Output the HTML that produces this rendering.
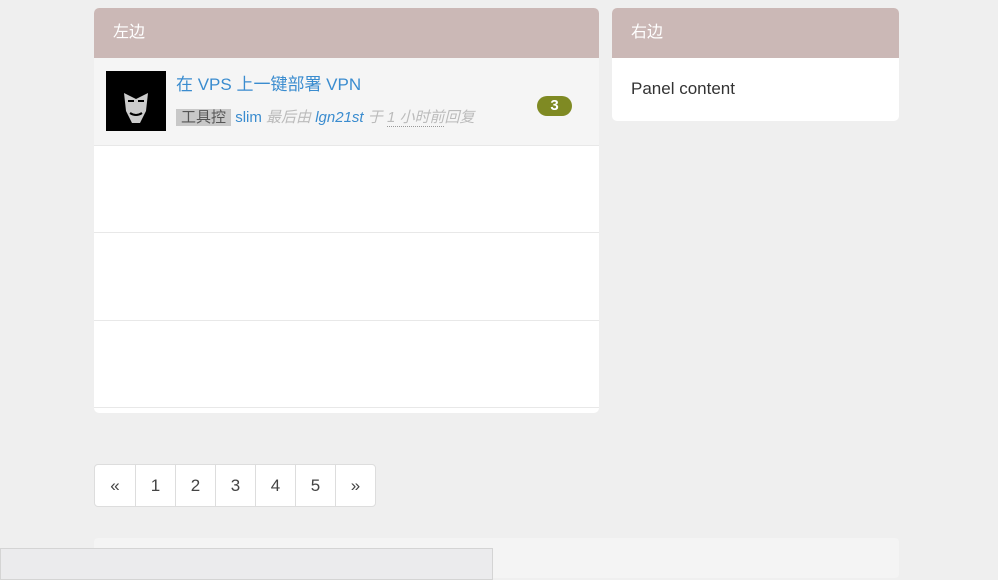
<!DOCTYPE html><html><head><meta charset="utf-8"><style>
body{margin:0;width:998px;height:568px;background:#efefef;font-family:"Liberation Sans","Noto Sans CJK SC",sans-serif;overflow:hidden;position:relative}
.p{position:absolute;background:#fff;border-radius:5px;overflow:hidden}
.h{background:#cbb8b6;color:#fff;height:50px;line-height:50px;padding-left:19px;font-size:16px}
.row{position:absolute;left:0;width:505px;border-bottom:1px solid #e8e8e8}
.pg{position:absolute;left:94px;top:464px;height:41px;display:flex;border:1px solid #ddd;border-radius:4px;background:#fff}
.pg div{width:40px;box-sizing:border-box;text-align:center;line-height:41px;font-size:17px;color:#444;border-left:1px solid #ddd}
.pg div:first-child{border-left:none;width:40px}
</style></head><body>
<div class="p" style="left:94px;top:8px;width:505px;height:405px">
<div class="h">左边</div>
<div class="row" style="top:50px;height:87px;background:#f5f5f5">
<div style="position:absolute;left:12px;top:13px;width:60px;height:60px;background:#000">
<svg width="60" height="60"><path d="M18 22 L30 28 L42 22 L40 40 L34 52 L26 52 L20 40Z" fill="#ccc"/><path d="M22 30h6M32 30h6" stroke="#000" stroke-width="2"/><path d="M24 42q6 4 12 0" stroke="#000" stroke-width="2" fill="none"/></svg></div>
<div style="position:absolute;left:82px;top:12px;font-size:17px;color:#3a8ccf">在 VPS 上一键部署 VPN</div>
<div style="position:absolute;left:82px;top:48px;font-size:15px;white-space:nowrap"><span style="background:#c8c8c8;color:#555;padding:0 5px">工具控</span> <span style="color:#3a8ccf">slim</span> <i style="color:#bbb">最后由</i> <i style="color:#3a8ccf">lgn21st</i> <i style="color:#bbb">于 <span style="border-bottom:1px dotted #999">1 小时前</span>回复</i></div>
<div style="position:absolute;left:443px;top:38px;width:35px;height:20px;border-radius:10px;background:#7f8a23;color:#fff;font-weight:bold;font-size:15px;text-align:center;line-height:20px">3</div>
</div>
<div class="row" style="top:138px;height:86px"></div>
<div class="row" style="top:225px;height:87px"></div>
<div class="row" style="top:313px;height:86px"></div>
</div>
<div class="p" style="left:612px;top:8px;width:287px;height:113px">
<div class="h">右边</div>
<div style="padding:21px 19px;font-size:17px;color:#333">Panel content</div>
</div>
<div class="pg"><div>«</div><div>1</div><div>2</div><div>3</div><div>4</div><div>5</div><div>»</div></div>
<div style="position:absolute;left:94px;top:538px;width:805px;height:40px;background:#f4f4f4;border-radius:4px"></div>
<div style="position:absolute;left:0;top:548px;width:491px;height:30px;background:#ebebed;border:1px solid #d4d4d4"></div>
</body></html>
